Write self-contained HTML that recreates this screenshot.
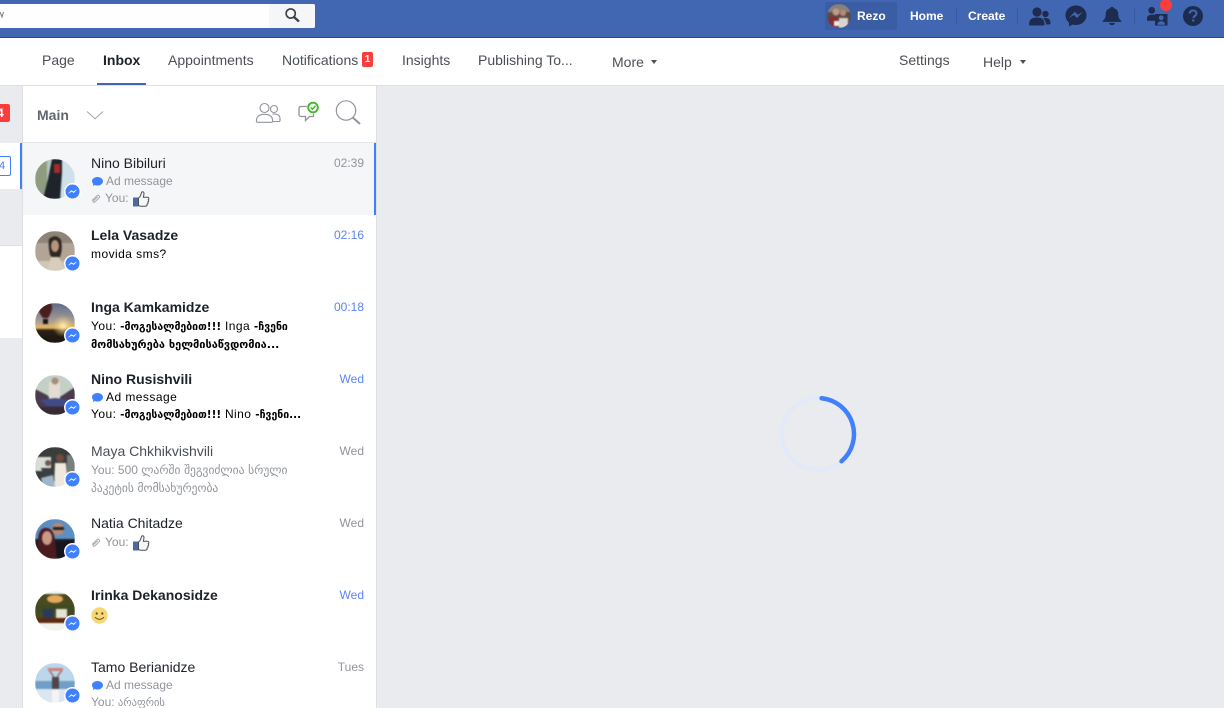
<!DOCTYPE html>
<html><head><meta charset="utf-8">
<style>
html,body{margin:0;padding:0;width:1224px;height:708px;overflow:hidden;background:#e9ebee}
body{position:relative;font-family:"Liberation Sans",Arial,"DejaVu Sans",sans-serif;-webkit-font-smoothing:auto}
.a{position:absolute;white-space:nowrap}
.tab{position:absolute;top:51px;font-size:14px;line-height:18px;color:#4b4f56;white-space:nowrap}
.n{position:absolute;left:91px;font-size:14px;line-height:18px;color:#1d2129;white-space:nowrap}
.n.b{font-weight:bold}
.t{position:absolute;right:860px;font-size:12px;line-height:16px;color:#90949c;white-space:nowrap}
.t.u{color:#5b84f5}
.s{position:absolute;left:91px;font-size:12px;line-height:18px;color:#90949c;white-space:nowrap}
.s.u{color:#000;letter-spacing:.45px}
.ka{font-family:"DejaVu Sans",sans-serif;font-size:10.5px;letter-spacing:0}
.s.u .ka{font-weight:bold;font-size:10.5px}
.s .ka.l{font-size:11.5px}
.s.u .ka.m{font-size:11px}
svg{position:absolute;display:block}
.av g{filter:blur(.7px)}
</style></head><body>

<!-- top bar -->
<div class="a" style="left:0;top:0;width:1224px;height:37px;background:#4267b2;border-bottom:1px solid #29487d"></div>
<div class="a" style="left:0;top:4px;width:315px;height:24px;background:#fff;border-radius:0 2px 2px 0"></div>
<div class="a" style="left:269px;top:4px;width:46px;height:24px;background:#f5f6f7;border-radius:0 2px 2px 0"></div>
<svg style="left:285px;top:8px" width="15" height="14" viewBox="0 0 15 14"><circle cx="5.700" cy="5.500" r="4.600" fill="none" stroke="#3b4048" stroke-width="1.600"/><path d="M9 9L14 13.600" stroke="#3b4048" stroke-width="2.300" fill="none"/></svg>
<svg style="left:0;top:11px" width="4" height="8" viewBox="0 0 4 8"><path d="M0 1L2 6L3.500 1" stroke="#777" fill="none"/></svg>

<div class="a" style="left:825px;top:2px;width:72px;height:28px;background:#3b5da3;border-radius:2px"></div>
<svg class="av" style="left:827px;top:4px" width="24" height="24" viewBox="0 0 24 24"><defs><clipPath id="c0"><circle cx="12" cy="12" r="12"/></clipPath></defs><g clip-path="url(#c0)"><rect width="24" height="24" fill="#5d4b44"/><rect y="0" width="24" height="8" fill="#8a8078"/><circle cx="9" cy="8" r="3.500" fill="#c49a84"/><circle cx="16" cy="9" r="3" fill="#b58c78"/><rect x="2" y="13" width="9" height="11" fill="#8c2b30"/><rect x="12" y="14" width="9" height="10" fill="#d8d4d0"/><rect x="7" y="17" width="5" height="5" fill="#eee"/></g></svg>
<div class="a" style="left:857px;top:8px;font-size:12px;line-height:16px;font-weight:bold;color:#fff">Rezo</div>
<div class="a" style="left:910px;top:8px;font-size:12px;line-height:16px;font-weight:bold;color:#fff">Home</div>
<div class="a" style="left:968px;top:8px;font-size:12px;line-height:16px;font-weight:bold;color:#fff">Create</div>
<div class="a" style="left:956px;top:7px;width:1px;height:18px;background:#3a5b9f"></div>
<div class="a" style="left:1017px;top:7px;width:1px;height:18px;background:#3a5b9f"></div>
<div class="a" style="left:1134px;top:7px;width:1px;height:18px;background:#3a5b9f"></div>

<!-- friends -->
<svg style="left:1029px;top:6px" width="22" height="20" viewBox="0 0 22 20"><g fill="#1c2b4f"><circle cx="8" cy="6" r="4.600"/><path d="M0 18.500C0 13.500 3 11.500 8 11.500S15.500 13.500 15.500 18.500Q15.500 19.500 14 19.500H1.500Q0 19.500 0 18.500Z"/><circle cx="16.500" cy="8" r="3.200"/><path d="M14 12.300Q15 12 16.500 12C20 12 21.500 14 21.500 17Q21.500 18.500 20 18.500H17C17 16 16 14 14 12.300Z"/></g></svg>
<!-- messenger -->
<svg style="left:1065px;top:5px" width="22" height="22" viewBox="0 0 22 22"><path fill="#1c2b4f" d="M11 .5C5 .5.5 4.800.5 10.300c0 3 1.300 5.500 3.500 7.300V21.500l3.600-2c1 .3 2.200.5 3.400.5 6 0 10.500-4.300 10.500-9.700S17 .5 11 .5z"/><path fill="#4267b2" d="M4.800 13l6-6.200 3 3 5-3-5.800 6.300-3-3.100z" transform="translate(-1 0)"/></svg>
<!-- bell -->
<svg style="left:1102px;top:6px" width="20" height="20" viewBox="0 0 20 22" preserveAspectRatio="none"><path fill="#1c2b4f" d="M10 .8c1 0 1.700.7 1.700 1.600 3 .8 4.600 3.200 4.600 6.500 0 3.800.8 5.600 3 7.300V17.500H.7V16.200c2.200-1.700 3-3.500 3-7.300 0-3.300 1.600-5.700 4.600-6.500C8.300 1.500 9 .8 10 .8z"/><path fill="#1c2b4f" d="M7 18.500h6c-.3 1.700-1.500 2.700-3 2.700s-2.700-1-3-2.700z"/></svg>
<!-- page people -->
<svg style="left:1146px;top:6px" width="23" height="20" viewBox="0 0 23 20"><g fill="#1c2b4f"><circle cx="5.700" cy="4.300" r="3.400"/><path d="M1 14.800V12C1 10 3 8.800 5.500 8.800H9V14.800Z"/><rect x="9" y="8" width="12.500" height="11.500"/></g><circle cx="15.200" cy="11.800" r="2.400" fill="#4267b2"/><path d="M11.500 18.800c0-2.300 1.400-3.500 3.700-3.500s3.800 1.200 3.800 3.500z" fill="#4267b2"/></svg>
<div class="a" style="left:1160px;top:-1px;width:12px;height:12px;background:#fa3e3e;border-radius:50%"></div>
<!-- help -->
<svg style="left:1183px;top:6px" width="20" height="20" viewBox="0 0 20 20"><circle cx="10" cy="10" r="10" fill="#1c2b4f"/><path d="M6.700 7.600C6.800 5.500 8.200 4.500 10.100 4.500c2 0 3.300 1.200 3.300 2.900 0 1.300-.7 2-1.700 2.700-.9.600-1.200 1-1.200 2" fill="none" stroke="#4267b2" stroke-width="2.100"/><rect x="9.200" y="13.400" width="2.100" height="2.200" fill="#4267b2"/></svg>

<!-- secondary nav -->
<div class="a" style="left:0;top:38px;width:1224px;height:47px;background:#fff;border-bottom:1px solid #dddfe2"></div>
<div class="tab" style="left:42px">Page</div>
<div class="tab" style="left:103px;font-weight:bold;color:#1d2129">Inbox</div>
<div class="a" style="left:97px;top:83px;width:49px;height:2px;background:#4267b2"></div>
<div class="tab" style="left:168px">Appointments</div>
<div class="tab" style="left:282px">Notifications</div>
<div class="a" style="left:362px;top:52px;width:11px;height:15px;background:#fa3e3e;border-radius:2px;color:#fff;font-size:10px;font-weight:bold;line-height:15px;text-align:center">1</div>
<div class="tab" style="left:402px">Insights</div>
<div class="tab" style="left:478px">Publishing To...</div>
<div class="tab" style="left:612px;top:53px">More</div>
<div class="a" style="left:651px;top:60px;width:0;height:0;border:3px solid transparent;border-top:4px solid #4b4f56;border-bottom:0"></div>
<div class="tab" style="left:899px;top:51px">Settings</div>
<div class="tab" style="left:983px;top:53px">Help</div>
<div class="a" style="left:1020px;top:60px;width:0;height:0;border:3px solid transparent;border-top:4px solid #4b4f56;border-bottom:0"></div>

<!-- far left column -->
<div class="a" style="left:0;top:143px;width:22px;height:46px;background:#fff"></div>
<div class="a" style="left:20px;top:143px;width:2px;height:46px;background:#4080ff"></div>
<div class="a" style="left:0;top:245px;width:22px;height:93px;background:#fff;border-top:1px solid #dddfe2;box-sizing:border-box"></div>
<div class="a" style="left:0;top:104px;width:10px;height:18px;background:#fa3e3e;border-radius:0 2px 2px 0;overflow:hidden;color:#fff;font-size:12px;font-weight:bold;line-height:18px"><span style="position:absolute;left:-3px">4</span></div>
<div class="a" style="left:-4px;top:156px;width:13px;height:18px;border:1px solid #4080ff;border-radius:2px;color:#4080ff;font-size:11px;line-height:18px;overflow:hidden"><span style="position:absolute;left:2px">4</span></div>

<!-- list column -->
<div class="a" style="left:22px;top:86px;width:355px;height:622px;background:#fff;border-left:1px solid #dddfe2;border-right:1px solid #dddfe2;box-sizing:border-box"></div>
<div class="a" style="left:23px;top:142px;width:353px;height:1px;background:#e4e6eb"></div>
<div class="a" style="left:23px;top:143px;width:353px;height:72px;background:#f5f6f7"></div>
<div class="a" style="left:374px;top:143px;width:2px;height:72px;background:#4080ff"></div>

<div class="a" style="left:37px;top:106px;font-size:14px;line-height:18px;font-weight:bold;color:#606770">Main</div>
<svg style="left:86px;top:110px" width="18" height="10" viewBox="0 0 18 10"><path d="M1 1.500L9 8.800L17 1.500" fill="none" stroke="#a4a8b0" stroke-width="1"/></svg>
<svg style="left:255px;top:101px" width="26" height="22" viewBox="0 0 26 22"><g fill="none" stroke="#90949c" stroke-width="1.100"><circle cx="9.500" cy="7" r="4.500"/><path d="M1.500 20.700C1 16 3.500 13.300 9.500 13.300S18 16 17.500 20.700Q17.400 21.300 16.500 21.300H2.500Q1.600 21.300 1.500 20.700Z"/><circle cx="19" cy="8" r="3.500"/><path d="M17.500 13.200Q18.500 13 19.500 13C23.500 13 25.500 15 25 19.700Q24.900 20.500 24 20.500H18"/></g></svg>
<svg style="left:298px;top:100px" width="23" height="23" viewBox="0 0 23 23"><path d="M3 6.500H15.500V16.500H11.500L7.500 20.500V16.500H3C1.800 16.500 1 15.700 1 14.500V8.500C1 7.300 1.800 6.500 3 6.500Z" fill="none" stroke="#90949c" stroke-width="1.300"/><circle cx="15" cy="7.500" r="6.200" fill="#fff"/><circle cx="15" cy="7.500" r="4.800" fill="none" stroke="#42b72a" stroke-width="1.900"/><path d="M12.700 7.500L14.500 9.300L17.500 5.800" fill="none" stroke="#42b72a" stroke-width="1.500"/></svg>
<svg style="left:335px;top:100px" width="27" height="25" viewBox="0 0 27 25"><circle cx="11" cy="10.500" r="9.700" fill="none" stroke="#90949c" stroke-width="1.200"/><path d="M18 17.700L25 24" stroke="#90949c" stroke-width="2" fill="none"/></svg>

<!-- avatars -->
<svg class="av" style="left:35px;top:159px" width="40" height="40" viewBox="0 0 40 40"><defs><clipPath id="ca"><circle cx="20" cy="20" r="20"/></clipPath></defs><g clip-path="url(#ca)"><rect width="40" height="40" fill="#b9c9c4"/><rect width="12" height="40" fill="#8f9c80"/><rect x="26" width="14" height="40" fill="#cfe0ea"/><path d="M17 0H27V14L25 40H8L13 20Z" fill="#1e242a"/><rect x="19" y="5" width="6" height="9" fill="#a82a2a"/></g></svg>
<svg class="av" style="left:35px;top:231px" width="40" height="40" viewBox="0 0 40 40"><defs><clipPath id="cb"><circle cx="20" cy="20" r="20"/></clipPath></defs><g clip-path="url(#cb)"><rect width="40" height="40" fill="#b3a596"/><rect width="40" height="12" fill="#8f847a"/><rect y="30" width="40" height="10" fill="#cfc6b6"/><path d="M14 8Q21 2 26 9Q28 18 25 26L20 30L15 24Q13 15 14 8Z" fill="#2d2621"/><ellipse cx="20" cy="15" rx="4" ry="6" fill="#b7947c"/><path d="M12 40L16 26L24 26L30 40Z" fill="#d8ccbb"/></g></svg>
<svg class="av" style="left:35px;top:303px" width="40" height="40" viewBox="0 0 40 40"><defs><clipPath id="cc"><circle cx="20" cy="20" r="20"/></clipPath><linearGradient id="gc" x1="0" y1="0" x2="0" y2="1"><stop offset="0" stop-color="#5c6a88"/><stop offset=".45" stop-color="#a79c96"/><stop offset=".62" stop-color="#e9b860"/><stop offset=".68" stop-color="#2a2016"/><stop offset="1" stop-color="#17130f"/></linearGradient><radialGradient id="gs" cx=".5" cy=".5" r=".5"><stop offset="0" stop-color="#fff3b8"/><stop offset="1" stop-color="#f3c25f" stop-opacity="0"/></radialGradient></defs><g clip-path="url(#cc)"><rect width="40" height="40" fill="url(#gc)"/><circle cx="28" cy="23" r="11" fill="url(#gs)"/><path d="M6 0H16Q19 6 13 15H8Q1 7 6 0Z" fill="#4a1e1e"/><rect x="8" y="16" width="5" height="5" fill="#1a1513"/></g></svg>
<svg class="av" style="left:35px;top:375px" width="40" height="40" viewBox="0 0 40 40"><defs><clipPath id="cd"><circle cx="20" cy="20" r="20"/></clipPath></defs><g clip-path="url(#cd)"><rect width="40" height="40" fill="#c4d0c6"/><path d="M0 14L12 20L18 26L28 20L40 12V40H0Z" fill="#4a3a4c"/><rect x="14" y="7" width="11" height="17" fill="#e4dcd2"/><circle cx="20" cy="6" r="3.500" fill="#a98c78"/><path d="M5 25L20 23L36 25L28 31H12Z" fill="#3f4c88"/><path d="M0 32L40 32V40H0Z" fill="#352b35"/></g></svg>
<svg class="av" style="left:35px;top:447px" width="40" height="40" viewBox="0 0 40 40"><defs><clipPath id="ce"><circle cx="20" cy="20" r="20"/></clipPath></defs><g clip-path="url(#ce)"><rect width="40" height="40" fill="#3a3d3c"/><rect y="10" width="16" height="14" fill="#d9dcd8"/><rect x="32" y="8" width="8" height="24" fill="#78807c"/><path d="M20 16H31L33 40H19Z" fill="#eee8dd"/><circle cx="25" cy="11" r="4" fill="#6d4c3c"/><circle cx="13" cy="16" r="3" fill="#6b5a4e"/><path d="M6 21H16L20 34L10 32Z" fill="#3b3f44"/><path d="M6 31L18 28L20 40H8Z" fill="#9fb6c8"/></g></svg>
<svg class="av" style="left:35px;top:519px" width="40" height="40" viewBox="0 0 40 40"><defs><clipPath id="cf"><circle cx="20" cy="20" r="20"/></clipPath></defs><g clip-path="url(#cf)"><rect width="40" height="40" fill="#5f8ec2"/><rect y="20" width="40" height="20" fill="#1a1c24"/><path d="M18 24L37 22L40 40H16Z" fill="#15161c"/><circle cx="23" cy="10" r="6" fill="#b98a72"/><rect x="18" y="8" width="11" height="3" fill="#2a2424"/><path d="M3 40V20Q4 8 12 9Q19 10 20 22L22 40Z" fill="#4a1c20"/><ellipse cx="12" cy="19" rx="5" ry="7" fill="#c99a84"/></g></svg>
<svg class="av" style="left:35px;top:591px" width="40" height="40" viewBox="0 0 40 40"><defs><clipPath id="cg"><circle cx="20" cy="20" r="20"/></clipPath></defs><g clip-path="url(#cg)"><rect width="40" height="40" fill="#f3f3ee"/><rect y="3" width="40" height="24" fill="#4a4a20"/><ellipse cx="20" cy="8" rx="8" ry="4" fill="#e3a95d"/><rect x="0" y="14" width="40" height="8" fill="#3e4a20"/><rect x="8" y="18" width="10" height="10" fill="#2a3a5a"/><rect x="21" y="18" width="11" height="10" fill="#e6e2d4"/><rect y="27" width="40" height="5" fill="#5c2a10"/></g></svg>
<svg class="av" style="left:35px;top:663px" width="40" height="40" viewBox="0 0 40 40"><defs><clipPath id="ch"><circle cx="20" cy="20" r="20"/></clipPath></defs><g clip-path="url(#ch)"><rect width="40" height="40" fill="#bcd6ec"/><rect y="18" width="40" height="8" fill="#6f9fc6"/><rect y="26" width="40" height="14" fill="#dbe6ee"/><rect x="17" y="14" width="7" height="12" fill="#50434a"/><rect x="17" y="26" width="7" height="14" fill="#f4f4f4"/><path d="M14 7L19 14M27 7L22 14" stroke="#a06a60" stroke-width="1.500"/><rect x="13" y="5" width="15" height="3" fill="#d08078"/></g></svg>

<!-- messenger badges -->
<svg width="0" height="0" style="left:0;top:0"><defs><g id="mb"><circle cx="8.500" cy="8.500" r="8.500" fill="#fff"/><circle cx="8.500" cy="8.500" r="7" fill="#4080ff"/><path d="M4.500 10.200L7.300 7.400L9.300 8.800L12.500 6.800L9.800 9.800L7.700 8.400Z" fill="#fff" stroke="#fff" stroke-width=".4"/></g></defs></svg>
<svg style="left:64px;top:183px" width="17" height="17"><use href="#mb"/></svg>
<svg style="left:64px;top:255px" width="17" height="17"><use href="#mb"/></svg>
<svg style="left:64px;top:327px" width="17" height="17"><use href="#mb"/></svg>
<svg style="left:64px;top:399px" width="17" height="17"><use href="#mb"/></svg>
<svg style="left:64px;top:471px" width="17" height="17"><use href="#mb"/></svg>
<svg style="left:64px;top:543px" width="17" height="17"><use href="#mb"/></svg>
<svg style="left:64px;top:615px" width="17" height="17"><use href="#mb"/></svg>
<svg style="left:64px;top:687px" width="17" height="17"><use href="#mb"/></svg>

<!-- shared icons -->
<svg width="0" height="0" style="left:0;top:0"><defs>
<g id="bub"><path d="M5.500 0C8.500 0 11 1.800 11 4.200S8.500 8.500 5.500 8.500Q4 8.500 2.800 8L.8 9L1.300 6.900C.5 6.200 0 5.300 0 4.200 0 1.800 2.500 0 5.500 0Z" fill="#4080ff"/></g>
<g id="clip"><path d="M1 7.500L6 2.800c1.500-1.400 3.700.6 2.200 2.100L3.800 9c-1 1-2.400-.3-1.400-1.300L6.800 3.800" fill="none" stroke="#a8abb2" stroke-width="1"/></g>
<g id="like"><rect x="0" y="6.500" width="5.500" height="9" fill="#4e69a2"/><path d="M5.500 7C7.500 6 8 3.500 8.500 1.500C9 .3 11 .5 11 2.500C11 4 10.500 5 10.300 6.300H14.500C16 6.300 16.300 8 15.300 8.700C16 9.500 15.700 10.700 14.800 11C15.300 12 14.800 13 14 13.200C14.300 14.300 13.600 15.200 12.500 15.200H7.500L5.500 14.500Z" fill="#f5f6f7" stroke="#4b4f56" stroke-width="1"/></g>
</defs></svg>

<!-- row 1 -->
<div class="n" style="top:154px">Nino Bibiluri</div>
<div class="t" style="top:155px">02:39</div>
<svg style="left:92px;top:177px" width="11" height="10"><use href="#bub"/></svg>
<div class="s" style="left:106px;top:172px">Ad message</div>
<svg style="left:91px;top:193px" width="11" height="11"><use href="#clip"/></svg>
<div class="s" style="left:105px;top:189px">You:</div>
<svg style="left:133px;top:191px" width="17" height="16"><use href="#like"/></svg>

<!-- row 2 -->
<div class="n b" style="top:226px">Lela Vasadze</div>
<div class="t u" style="top:227px">02:16</div>
<div class="s u" style="top:245px">movida sms?</div>

<!-- row 3 -->
<div class="n b" style="top:298px">Inga Kamkamidze</div>
<div class="t u" style="top:299px">00:18</div>
<div class="s u" style="top:317px">You: <span class="ka">-მოგესალმებით!!!</span> Inga <span class="ka">-ჩვენი</span></div>
<div class="s u" style="top:335px"><span class="ka m">მომსახურება ხელმისაწვდომია...</span></div>

<!-- row 4 -->
<div class="n b" style="top:370px">Nino Rusishvili</div>
<div class="t u" style="top:371px">Wed</div>
<svg style="left:92px;top:393px" width="11" height="10"><use href="#bub"/></svg>
<div class="s u" style="left:106px;top:388px">Ad message</div>
<div class="s u" style="top:405px">You: <span class="ka">-მოგესალმებით!!!</span> Nino <span class="ka">-ჩვენი...</span></div>

<!-- row 5 -->
<div class="n" style="top:442px;color:#4b4f56">Maya Chkhikvishvili</div>
<div class="t" style="top:443px">Wed</div>
<div class="s" style="top:461px">You: 500 <span class="ka l">ლარში შეგვიძლია სრული</span></div>
<div class="s" style="top:479px"><span class="ka l">პაკეტის მომსახურეობა</span></div>

<!-- row 6 -->
<div class="n" style="top:514px">Natia Chitadze</div>
<div class="t" style="top:515px">Wed</div>
<svg style="left:91px;top:537px" width="11" height="11"><use href="#clip"/></svg>
<div class="s" style="left:105px;top:533px">You:</div>
<svg style="left:133px;top:535px" width="17" height="16"><use href="#like"/></svg>

<!-- row 7 -->
<div class="n b" style="top:586px">Irinka Dekanosidze</div>
<div class="t u" style="top:587px">Wed</div>
<svg style="left:91px;top:607px" width="17" height="17" viewBox="0 0 17 17"><circle cx="8.500" cy="8.500" r="8.200" fill="#f7d774"/><circle cx="5.700" cy="6.500" r="1.100" fill="#5a4a2a"/><circle cx="11.300" cy="6.500" r="1.100" fill="#5a4a2a"/><path d="M4 10.200Q8.500 14.500 13 10.200" fill="none" stroke="#5a4a2a" stroke-width="1"/></svg>

<!-- row 8 -->
<div class="n" style="top:658px">Tamo Berianidze</div>
<div class="t" style="top:659px">Tues</div>
<svg style="left:92px;top:681px" width="11" height="10"><use href="#bub"/></svg>
<div class="s" style="left:106px;top:676px">Ad message</div>
<div class="s" style="top:693px">You: <span class="ka">არაფრის</span></div>

<!-- spinner -->
<svg style="left:780px;top:396px" width="78" height="76" viewBox="0 0 78 76"><circle cx="38" cy="38" r="36" fill="none" stroke="#e2e9f8" stroke-width="4"/><path d="M41.600 2.200A36 36 0 0 1 61.500 65.300" fill="none" stroke="#4080ff" stroke-width="4.500" stroke-linecap="round"/></svg>

</body></html>
